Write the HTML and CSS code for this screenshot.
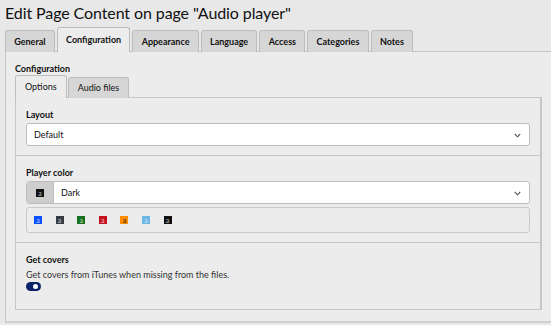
FILE: index.html
```html
<!DOCTYPE html>
<html>
<head lang="en">
    <meta charset="UTF-8">
    <title>Edit Page Content</title>
    <link rel="stylesheet" href="styles.css">
</head>
<body>
<h1 class="page-title">Edit Page Content on page "Audio player"</h1>
<div class="tabs">
    <a class="tab" href="javascript:void(0);">General</a>
    <a class="tab tab-active" href="javascript:void(0);">Configuration</a>
    <a class="tab" href="javascript:void(0);">Appearance</a>
    <a class="tab" href="javascript:void(0);">Language</a>
    <a class="tab" href="javascript:void(0);">Access</a>
    <a class="tab" href="javascript:void(0);">Categories</a>
    <a class="tab" href="javascript:void(0);">Notes</a>
</div>
<div class="panel">
    <div class="panel-legend">Configuration</div>
    <div class="subtabs">
        <a class="subtab subtab-active" href="javascript:void(0);">Options</a>
        <a class="subtab" href="javascript:void(0);">Audio files</a>
    </div>
    <div class="subpanel">
        <div class="section">
            <label class="field-label">Layout</label>
            <div class="select">
                <span class="select-text">Default</span>
                <svg class="chevron" width="7" height="5" viewBox="0 0 7 5"><path d="M0.8 1 L3.5 3.8 L6.2 1" fill="none" stroke="#555" stroke-width="1.1"/></svg>
            </div>
        </div>
        <div class="section">
            <label class="field-label">Player color</label>
            <div class="select select-addon">
                <span class="addon"><span class="swatch swatch-dark">a</span></span>
                <span class="select-text">Dark</span>
                <svg class="chevron" width="7" height="5" viewBox="0 0 7 5"><path d="M0.8 1 L3.5 3.8 L6.2 1" fill="none" stroke="#555" stroke-width="1.1"/></svg>
            </div>
            <div class="swatches">
                <span class="swatch swatch-blue">a</span>
                <span class="swatch swatch-grey">a</span>
                <span class="swatch swatch-green">a</span>
                <span class="swatch swatch-red">a</span>
                <span class="swatch swatch-orange">a</span>
                <span class="swatch swatch-light">a</span>
                <span class="swatch swatch-dark">a</span>
            </div>
        </div>
        <div class="section section-last">
            <label class="field-label">Get covers</label>
            <p class="field-help">Get covers from iTunes when missing from the files.</p>
            <span class="toggle"><span class="toggle-dot"></span></span>
        </div>
    </div>
</div>
</body>
</html>
```

FILE: styles.css
```css
body {
    margin: 0;
    padding: 0 5px;
    background: #e8e8e8;
    font-family: "Lato", "Liberation Sans", sans-serif;
    color: #111;
}
a {
    text-decoration: none;
    color: #111;
}
.page-title {
    margin: 0;
    padding: 2px 0 0 0;
    height: 26px;
    font-size: 16px;
    font-weight: normal;
    line-height: 22px;
    letter-spacing: -0.1px;
}
.tabs {
    display: flex;
    align-items: flex-end;
    gap: 2px;
    height: 24px;
    position: relative;
    z-index: 1;
}
.tab {
    display: block;
    height: 21px;
    padding: 0 8.25px;
    line-height: 21px;
    font-size: 9px;
    font-weight: bold;
    background: #d6d6d6;
    border: 1px solid #bcbcbc;
    border-bottom: none;
    border-radius: 3px 3px 0 0;
}
.tab-active {
    height: 24px;
    line-height: 24px;
    background: #ececec;
}
.panel {
    margin-top: -1px;
    width: 527px;
    padding: 10px 10px 11px 9px;
    background: #ececec;
    border: 1px solid #c6c6c6;
    border-right: 2px solid #c6c6c6;
    border-bottom: 2px solid #d0d0d0;
}
.panel-legend {
    height: 14px;
    font-size: 9px;
    font-weight: bold;
    line-height: 14px;
}
.subtabs {
    display: flex;
    align-items: flex-end;
    gap: 1px;
    height: 22px;
    position: relative;
    z-index: 1;
}
.subtab {
    display: block;
    height: 20px;
    padding: 0 9px;
    line-height: 20px;
    font-size: 9px;
    background: #d6d6d6;
    border: 1px solid #bcbcbc;
    border-bottom: none;
    border-radius: 3px 3px 0 0;
}
.subtab-active {
    height: 22px;
    line-height: 22px;
    background: #ececec;
}
.subpanel {
    margin-top: -1px;
    border: 1px solid #c6c6c6;
    border-right: 2px solid #c6c6c6;
}
.section {
    padding: 10px 10px 9px 10px;
    border-bottom: 1px solid #c6c6c6;
}
.section-last {
    border-bottom: none;
    height: 47px;
}
.field-label {
    display: block;
    height: 15px;
    font-size: 9px;
    font-weight: bold;
    line-height: 14px;
}
.select {
    display: flex;
    align-items: center;
    height: 21px;
    padding: 0 8px 0 7px;
    font-size: 9px;
    background: #ffffff;
    border: 1px solid #bdbdbd;
    border-radius: 3px;
}
.select-text {
    flex: 1;
}
.chevron {
    margin-top: 1px;
}
.select-addon {
    padding-left: 0;
}
.addon {
    flex: none;
    display: flex;
    align-items: center;
    justify-content: center;
    width: 26px;
    height: 21px;
    margin-right: 7px;
    background: #cdcdcd;
    border-right: 1px solid #bdbdbd;
    border-radius: 3px 0 0 3px;
}
.swatches {
    display: flex;
    align-items: center;
    gap: 13.6px;
    height: 24px;
    margin-top: 3px;
    padding: 0 7px;
    border: 1px solid #c8c8c8;
    border-radius: 3px;
}
.swatch {
    display: block;
    flex: none;
    width: 8px;
    height: 8px;
    font-size: 7px;
    line-height: 9px;
    text-align: center;
    color: rgba(255, 255, 255, 0.7);
}
.swatch-blue { background: #0a50ff; }
.swatch-grey { background: #363b44; }
.swatch-green { background: #14701c; }
.swatch-red { background: #c4121e; }
.swatch-orange { background: #ff8c00; color: #222; }
.swatch-light { background: #6ab6e4; }
.swatch-dark { background: #111111; }
.field-help {
    margin: 0;
    height: 15px;
    font-size: 9px;
    line-height: 14px;
    color: #333;
}
.toggle {
    display: block;
    position: relative;
    width: 15px;
    height: 9px;
    margin-top: -1px;
    background: #0b2368;
    border-radius: 5px;
}
.toggle-dot {
    position: absolute;
    top: 2px;
    right: 3px;
    width: 5px;
    height: 5px;
    background: #ffffff;
    border-radius: 3px;
}
```
